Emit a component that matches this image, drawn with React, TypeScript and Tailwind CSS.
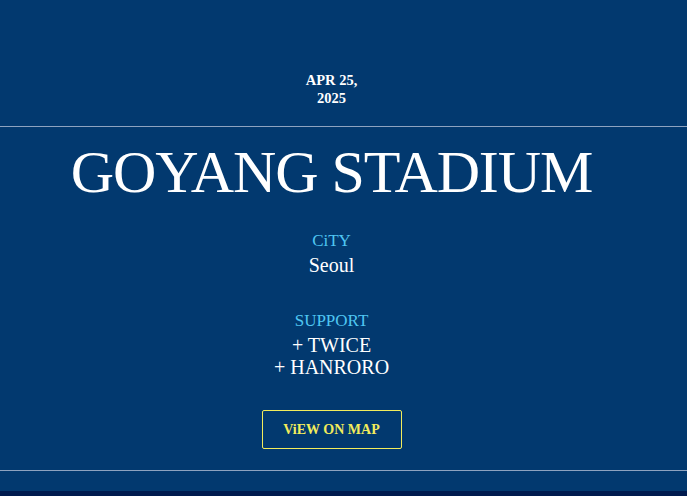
export default function App() {
  const support = ['TWICE', 'HANRORO'];

  return (
    <div className="w-full min-h-[496px] bg-[#02396f] flex flex-col font-['Liberation_Serif',serif] overflow-hidden">
      {/* Date */}
      <div className="pt-[71px] pr-[24px] flex justify-center">
        <div className="w-[70px] text-center text-white font-bold text-[14.5px] leading-[18px]">
          APR 25, 2025
        </div>
      </div>

      <div className="mt-[19px] h-px w-full bg-[#8ea3c0]" />

      {/* Venue details */}
      <div className="pr-[24px] flex flex-col items-center text-center">
        <h1 className="mt-[15px] text-white text-[60px] leading-[60px] tracking-[-1.1px] font-normal whitespace-nowrap">
          GOYANG STADIUM
        </h1>

        <p className="mt-[29px] text-[#4fc6f2] text-[17px] leading-[20px]">CiTY</p>
        <p className="mt-[2px] text-white text-[20px] leading-[24px]">Seoul</p>

        <p className="mt-[34px] text-[#4fc6f2] text-[17px] leading-[20px]">SUPPORT</p>
        <div className="mt-[3px] flex flex-col items-center">
          {support.map((band) => (
            <span key={band} className="text-white text-[20px] leading-[22px]">
              + {band}
            </span>
          ))}
        </div>

        <button className="mt-[32px] w-[140px] h-[39px] flex items-center justify-center border border-[#f2ec5c] rounded-[2px] text-[#f2ec5c] text-[14px] font-bold">
          ViEW ON MAP
        </button>
      </div>

      <div className="mt-[21px] h-px w-full bg-[#8ea3c0]" />

      <div className="mt-[20px] h-[20px] w-full bg-[#001a4e]" />
    </div>
  );
}
